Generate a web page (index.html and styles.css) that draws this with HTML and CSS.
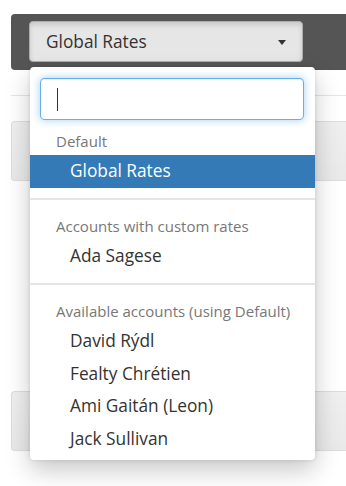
FILE: index.html
```html
<!DOCTYPE html>
<html lang="en">
<head>
  <meta charset="UTF-8" />
  <meta name="viewport" content="width=device-width, initial-scale=1" />
  <title>Rates</title>

  <link rel="stylesheet" href="styles.css">
</head>
<body>

  <div class="page">
    <!-- Toolbar with the rate selector -->
    <div class="toolbar">
      <div class="picker">
        <button class="picker-btn" type="button">
          <span>Global Rates</span>
          <span class="caret"></span>
        </button>

        <div class="picker-menu">
          <div class="search">
            <span class="cursor"></span>
          </div>

          <div class="menu-header first">Default</div>
          <div class="menu-item active">Global Rates</div>

          <div class="divider"></div>
          <div class="menu-header">Accounts with custom rates</div>
          <div class="menu-item">Ada Sagese</div>

          <div class="divider"></div>
          <div class="menu-header">Available accounts (using Default)</div>
          <div class="menu-item">David Rýdl</div>
          <div class="menu-item">Fealty Chrétien</div>
          <div class="menu-item">Ami Gaitán (Leon)</div>
          <div class="menu-item">Jack Sullivan</div>
        </div>
      </div>
    </div>

    <div class="rule"></div>
    <div class="panel"></div>
    <div class="panel lower"></div>
  </div>

</body>
</html>
```

FILE: styles.css
```css
/* Page */
body {
  margin: 0;
  background: #fff;
  font-family: "Open Sans", "Noto Sans", sans-serif;
  color: #333;
}

.page {
  padding: 14px 0 40px 11px;
}

/* Dark toolbar */
.toolbar {
  background: #555;
  border-radius: 4px 0 0 4px;
  padding: 7px 0 8px 18px;
}

.picker {
  position: relative;
  width: 274px;
}

.picker-btn {
  display: flex;
  align-items: center;
  justify-content: space-between;
  width: 274px;
  height: 41px;
  padding: 0 16px 0 16px;
  background: #e6e6e6;
  border: 1px solid #adadad;
  border-radius: 4px;
  box-shadow: inset 0 3px 5px rgba(0,0,0,0.125);
  font-family: inherit;
  font-size: 17.3px;
  color: #333;
  box-sizing: border-box;
}

.caret {
  width: 0;
  height: 0;
  border-top: 5px solid #333;
  border-left: 4.5px solid transparent;
  border-right: 4.5px solid transparent;
  margin-top: 1px;
}

/* Dropdown menu */
.picker-menu {
  position: absolute;
  top: calc(100% + 5px);
  left: 1px;
  width: 285px;
  padding: 11px 0 5px;
  background: #fff;
  border-radius: 4px;
  box-shadow: 0 10px 24px rgba(0,0,0,0.22), 0 0 4px rgba(0,0,0,0.12);
  box-sizing: border-box;
  z-index: 10;
}

.search {
  display: flex;
  align-items: center;
  height: 42px;
  margin: 0 11px 0 10px;
  padding-left: 16px;
  border: 1px solid #66afe9;
  border-radius: 4px;
  box-shadow: inset 0 1px 1px rgba(0,0,0,0.075), 0 0 8px rgba(102,175,233,0.6);
  box-sizing: border-box;
}

.cursor {
  width: 1px;
  height: 23px;
  background: #333;
}

.menu-header {
  padding: 16.5px 20px 4px 26px;
  font-size: 15px;
  line-height: 20px;
  color: #777;
}

.menu-header.first {
  padding-top: 11px;
}

.menu-item {
  padding: 4px 20px 4px 40px;
  font-size: 17.3px;
  line-height: 24.5px;
  color: #333;
}

.menu-item.active {
  background: #337ab7;
  color: #fff;
}

.divider {
  height: 2px;
  margin-top: 10px;
  background: #e5e5e5;
}

/* Content behind the menu */
.rule {
  margin-top: 25px;
  border-top: 1px solid #e5e5e5;
}

.panel {
  height: 58px;
  margin-top: 25px;
  background: linear-gradient(#efefef, #e9e9e9);
  border: 1px solid #ddd;
  border-right: none;
  border-radius: 4px 0 0 4px;
}

.panel.lower {
  margin-top: 210px;
}
```
